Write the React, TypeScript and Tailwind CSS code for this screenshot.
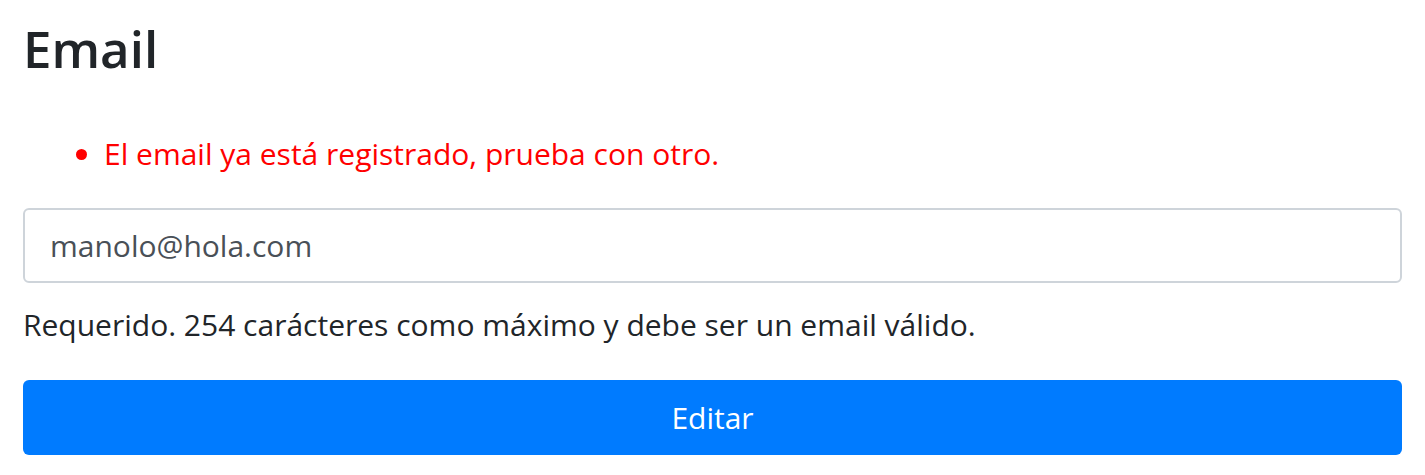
export default function App() {
  return (
    <div className="min-h-screen bg-white px-[23px] pt-[12px] font-['Open_Sans',sans-serif]">
      <h1 className="text-[51px] font-semibold leading-[72px] text-[#212529]">Email</h1>

      <ul className="mt-[50px] list-disc pl-[81px] text-[30px] leading-[40px] text-[#ff0000]">
        <li>El email ya está registrado, prueba con otro.</li>
      </ul>

      <input
        type="email"
        defaultValue="manolo@hola.com"
        className="mt-[34px] block h-[75px] w-full rounded-[6px] border-2 border-[#ced4da] bg-white px-[25px] text-[30px] text-[#495057] outline-none"
      />

      <p className="mt-[12px] text-[30px] leading-[60px] text-[#212529]">
        Requerido. 254 carácteres como máximo y debe ser un email válido.
      </p>

      <button
        type="button"
        className="mt-[25px] block h-[75px] w-full rounded-[6px] bg-[#007bff] text-[30px] text-white"
      >
        Editar
      </button>
    </div>
  );
}
